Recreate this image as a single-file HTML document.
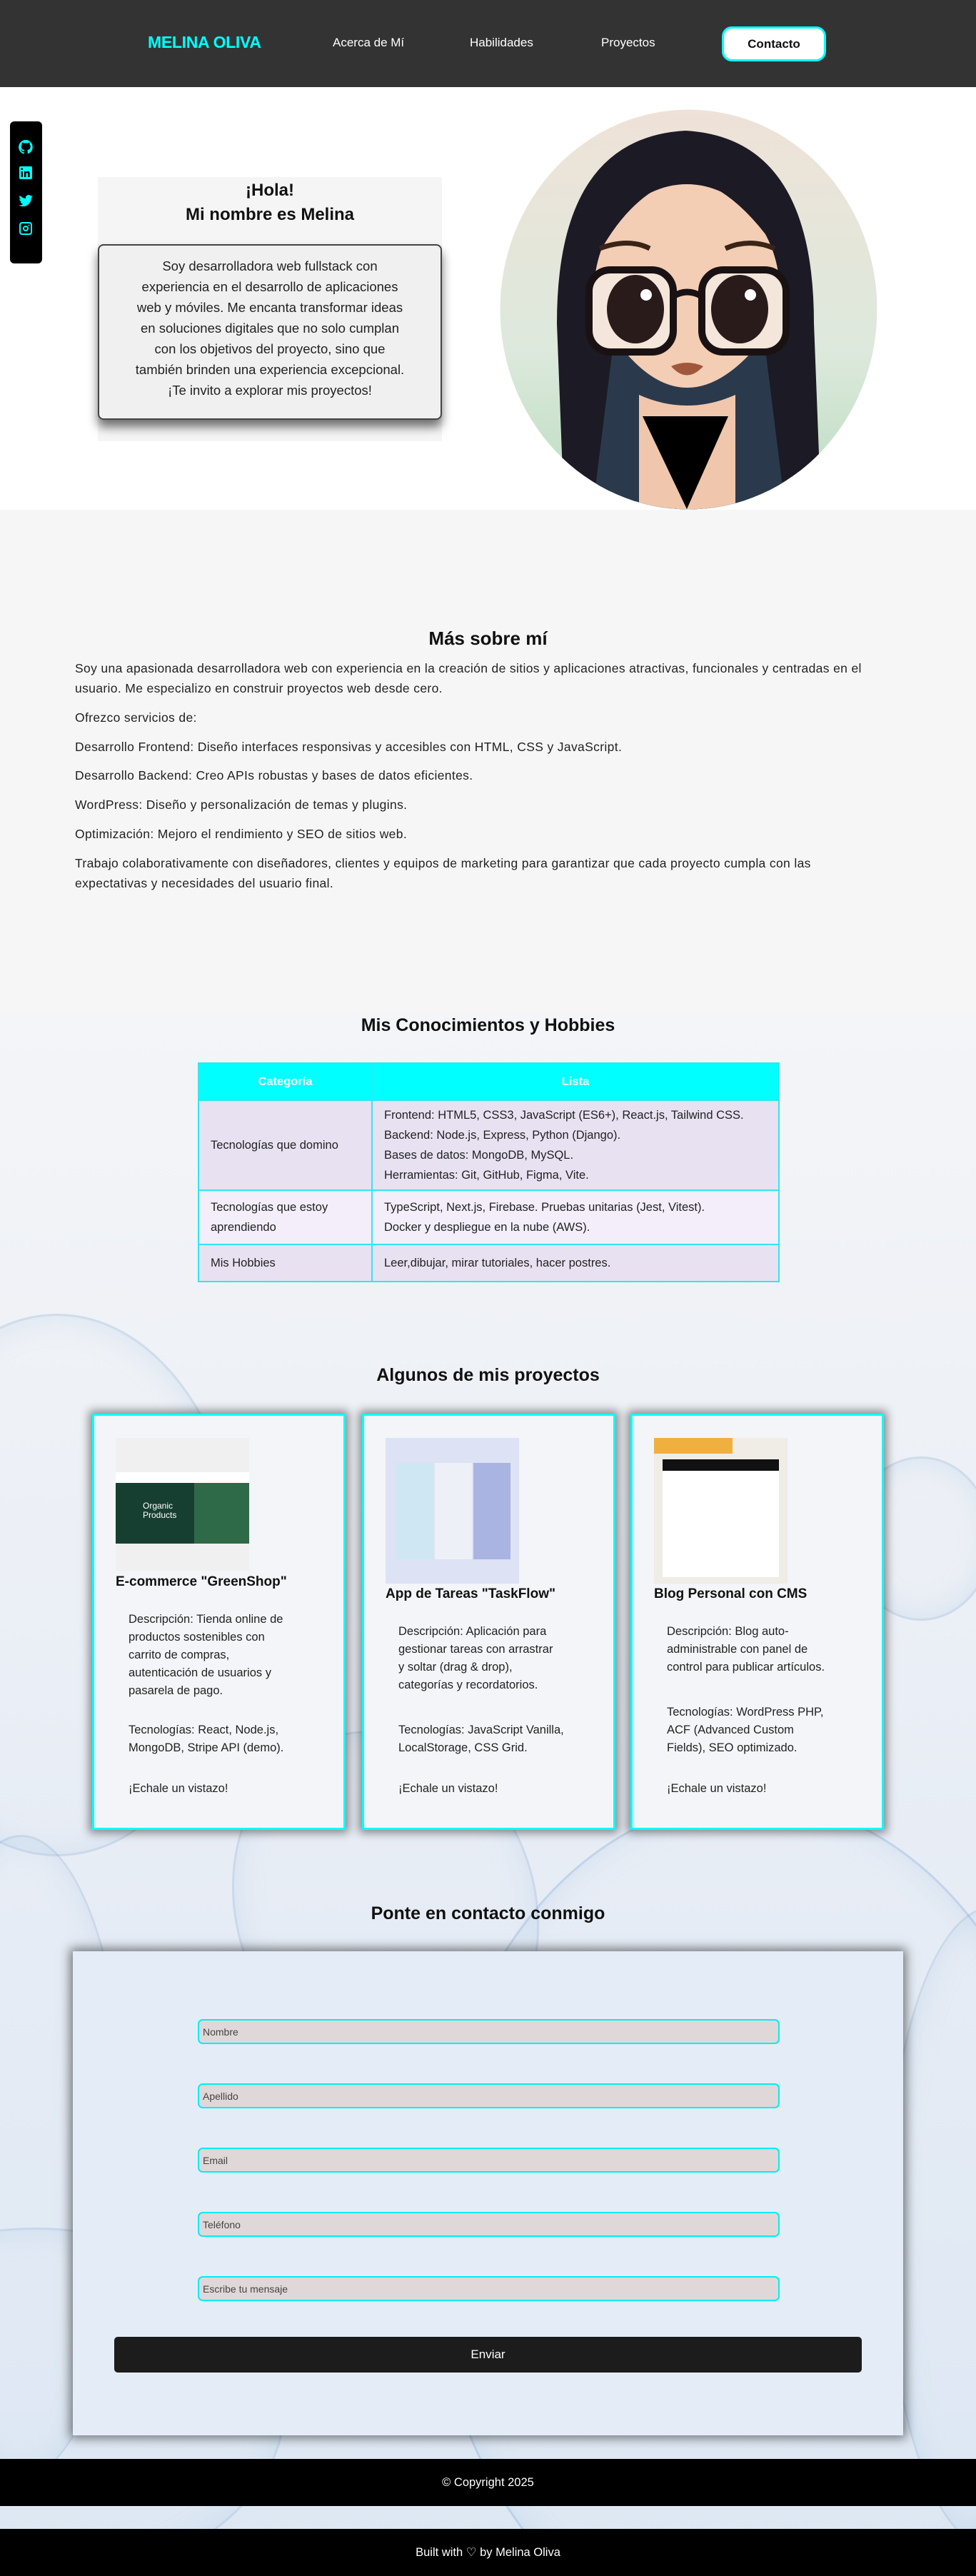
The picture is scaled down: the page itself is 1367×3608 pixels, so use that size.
<!DOCTYPE html>
<html><head><meta charset="utf-8">
<style>
*{margin:0;padding:0;box-sizing:border-box}
body{width:1367px;height:3608px;position:relative;font-family:"Liberation Sans",sans-serif;color:#111;background:#fff;overflow:hidden}
.abs{position:absolute}
header{position:absolute;left:0;top:0;width:1367px;height:122px;background:#333}
.logo{left:207px;top:46px;color:#00ffff;font-weight:bold;font-size:23px;letter-spacing:-0.3px}
.nav{top:50px;color:#fff;font-size:17px}
.btn{left:1011px;top:37px;width:146px;height:49px;background:#fff;border:3px solid #00ffff;border-radius:14px;text-align:center;line-height:43px;font-size:17px;font-weight:bold;color:#111}
.side{left:14px;top:170px;width:45px;height:199px;background:#000;border-radius:6px}
.hero{left:137px;top:248px;width:482px;height:370px;background:#f5f5f5}
.hero h2{text-align:center;font-size:24px;line-height:34px;margin-top:2px}
.inner{left:137px;top:342px;width:482px;height:246px;background:#f0f0f0;border:2px solid #444;border-radius:8px;box-shadow:0 10px 14px rgba(0,0,0,.55);text-align:center;font-size:18.5px;line-height:29px;padding-top:14px;color:#222}
.about{left:0;top:714px;width:1367px;height:706px;background:#f6f6f7}
.h{font-weight:bold;text-align:center;font-size:26px;width:1367px;left:0}
.p{left:105px;width:1200px;font-size:17.5px;letter-spacing:0.35px;line-height:28px;color:#222;white-space:nowrap}
.bg{left:0;top:1420px;width:1367px;height:2188px;background:linear-gradient(180deg,#f4f5f8 0%,#eef1f6 25%,#e6ecf5 60%,#dce7f3 100%);overflow:hidden}
.bub{position:absolute;border-radius:50%;border:3px solid rgba(150,180,215,.35);box-shadow:inset 0 0 40px rgba(170,200,230,.35)}
table{position:absolute;left:277px;top:1488px;width:815px;border-collapse:collapse;font-size:16.5px;color:#222}
td,th{border:2px solid #2ee8f0;padding:0 16px;vertical-align:middle;line-height:28px}
th{background:#00ffff;color:#fff;height:52px;font-weight:bold}
.card{width:355px;height:583px;top:1980px;background:#f3f5f9;border:3px solid #00ffff;box-shadow:0 0 12px 4px rgba(0,0,0,.45)}
.card h3{position:absolute;font-size:19px;font-weight:bold;white-space:nowrap}
.card .d{position:absolute;left:48px;width:280px;font-size:16.5px;line-height:25px;color:#222;white-space:nowrap}
.form{left:102px;top:2733px;width:1163px;height:678px;background:#e4edf7;box-shadow:0 0 14px 4px rgba(0,0,0,.5)}
.inp{left:277px;width:815px;height:35px;background:#e0d8d8;border:2px solid #00eef5;border-radius:7px;font-size:14px;color:#444;padding:8px 5px}
.send{left:160px;top:3273px;width:1047px;height:50px;background:#1c1c1c;border-radius:5px;color:#fff;text-align:center;line-height:50px;font-size:17px}
.foot{left:0;width:1367px;background:#000;color:#fff;text-align:center;font-size:16.5px}
</style></head><body>
<header>
<div class="abs logo">MELINA OLIVA</div>
<div class="abs nav" style="left:466px">Acerca de Mí</div>
<div class="abs nav" style="left:658px">Habilidades</div>
<div class="abs nav" style="left:842px">Proyectos</div>
<div class="abs btn">Contacto</div>
</header>

<div class="abs hero"><h2>¡Hola!<br>Mi nombre es Melina</h2></div>
<div class="abs inner">Soy desarrolladora web fullstack con<br>experiencia en el desarrollo de aplicaciones<br>web y móviles. Me encanta transformar ideas<br>en soluciones digitales que no solo cumplan<br>con los objetivos del proyecto, sino que<br>también brinden una experiencia excepcional.<br>¡Te invito a explorar mis proyectos!</div>

<svg class="abs" style="left:700px;top:153px" width="529" height="561" viewBox="0 0 529 561">
<defs><clipPath id="c"><ellipse cx="264.5" cy="280.5" rx="264" ry="280"/></clipPath>
<linearGradient id="g" x1="0" y1="0" x2="0" y2="1"><stop offset="0" stop-color="#efe2d8"/><stop offset=".6" stop-color="#dde9dc"/><stop offset="1" stop-color="#b9dcc0"/></linearGradient></defs>
<g clip-path="url(#c)">
<rect width="529" height="561" fill="url(#g)"/>
<path d="M90 561 L80 300 Q80 40 260 30 Q440 40 440 300 L450 561Z" fill="#1c1a25"/>
<ellipse cx="262" cy="255" rx="130" ry="150" fill="#f3cdb4"/>
<path d="M140 200 Q170 70 262 60 Q360 70 390 200 Q330 110 262 95 Q190 110 140 200Z" fill="#1c1a25"/>
<path d="M160 320 L130 561 L400 561 L370 320 Q260 460 160 320Z" fill="#2a3a4c"/>
<path d="M195 400 Q262 430 330 400 L330 561 L195 561Z" fill="#f0c7ac"/>
<path d="M200 430 L262 560 L320 430" fill="#000"/>
<rect x="125" y="225" width="118" height="115" rx="30" fill="#f5e6dc" stroke="#1a1212" stroke-width="10"/>
<rect x="283" y="225" width="118" height="115" rx="30" fill="#f5e6dc" stroke="#1a1212" stroke-width="10"/>
<path d="M243 262 Q262 250 283 262" stroke="#1a1212" stroke-width="9" fill="none"/>
<ellipse cx="190" cy="280" rx="40" ry="48" fill="#2a1b1b"/>
<ellipse cx="336" cy="280" rx="40" ry="48" fill="#2a1b1b"/>
<circle cx="205" cy="260" r="8" fill="#fff"/><circle cx="351" cy="260" r="8" fill="#fff"/>
<path d="M140 195 Q180 180 210 195" stroke="#3a2418" stroke-width="7" fill="none"/>
<path d="M316 195 Q350 180 385 195" stroke="#3a2418" stroke-width="7" fill="none"/>
<path d="M240 360 Q262 350 285 360 Q262 385 240 360Z" fill="#a0583c"/>
</g></svg>

<div class="abs side">
<svg width="45" height="199" viewBox="0 0 45 199" fill="#00ffff">
<path d="M22 26a10 10 0 0 0-3 19.5c.5.1.7-.2.7-.5v-2c-2.8.6-3.4-1.3-3.4-1.3-.5-1.2-1.1-1.5-1.1-1.5-.9-.6.1-.6.1-.6 1 .1 1.5 1 1.5 1 .9 1.5 2.4 1.1 3 .8.1-.6.4-1.1.6-1.3-2.2-.3-4.6-1.1-4.6-5 0-1.1.4-2 1-2.7-.1-.3-.4-1.3.1-2.7 0 0 .8-.3 2.8 1a9.6 9.6 0 0 1 5 0c1.9-1.3 2.8-1 2.8-1 .5 1.4.2 2.4.1 2.7.6.7 1 1.6 1 2.7 0 3.9-2.3 4.7-4.6 5 .4.3.7.9.7 1.9v2.8c0 .3.2.6.7.5A10 10 0 0 0 22 26z"/>
<rect x="13" y="63" width="18" height="18" rx="2"/><g fill="#000"><rect x="15.5" y="70" width="2.5" height="8"/><circle cx="16.7" cy="66.8" r="1.5"/><path d="M20 70h2.4v1.2c.5-.8 1.4-1.4 2.6-1.4 2 0 2.6 1.3 2.6 3.2V78h-2.5v-4.3c0-1-.3-1.6-1.2-1.6s-1.4.7-1.4 1.6V78H20z"/></g>
<path d="M32 105a8 8 0 0 1-2.3.6 4 4 0 0 0 1.8-2.2 8 8 0 0 1-2.5 1 4 4 0 0 0-6.9 3.6 11.5 11.5 0 0 1-8.3-4.2 4 4 0 0 0 1.2 5.4 4 4 0 0 1-1.8-.5 4 4 0 0 0 3.2 4 4 4 0 0 1-1.8.1 4 4 0 0 0 3.8 2.8A8.1 8.1 0 0 1 12 117.3a11.5 11.5 0 0 0 17.7-10.2A8 8 0 0 0 32 105z"/>
<path d="M17 141h10a4 4 0 0 1 4 4v10a4 4 0 0 1-4 4H17a4 4 0 0 1-4-4v-10a4 4 0 0 1 4-4zm0 2a2 2 0 0 0-2 2v10a2 2 0 0 0 2 2h10a2 2 0 0 0 2-2v-10a2 2 0 0 0-2-2zm5 3a4 4 0 1 1 0 8 4 4 0 0 1 0-8zm0 2a2 2 0 1 0 0 4 2 2 0 0 0 0-4zm4.5-3.5a1 1 0 1 1 0 2 1 1 0 0 1 0-2z"/>
</svg></div>

<div class="abs about"></div>
<div class="abs h" style="top:879px">Más sobre mí</div>
<div class="abs p" style="top:922px">Soy una apasionada desarrolladora web con experiencia en la creación de sitios y aplicaciones atractivas, funcionales y centradas en el<br>usuario. Me especializo en construir proyectos web desde cero.</div>
<div class="abs p" style="top:991px">Ofrezco servicios de:</div>
<div class="abs p" style="top:1032px">Desarrollo Frontend: Diseño interfaces responsivas y accesibles con HTML, CSS y JavaScript.</div>
<div class="abs p" style="top:1072px">Desarrollo Backend: Creo APIs robustas y bases de datos eficientes.</div>
<div class="abs p" style="top:1113px">WordPress: Diseño y personalización de temas y plugins.</div>
<div class="abs p" style="top:1154px">Optimización: Mejoro el rendimiento y SEO de sitios web.</div>
<div class="abs p" style="top:1195px">Trabajo colaborativamente con diseñadores, clientes y equipos de marketing para garantizar que cada proyecto cumpla con las<br>expectativas y necesidades del usuario final.</div>

<div class="abs bg">
<div class="bub" style="left:-180px;top:420px;width:520px;height:760px"></div>
<div class="bub" style="left:1190px;top:620px;width:200px;height:230px"></div>
<div class="bub" style="left:330px;top:1000px;width:420px;height:500px;transform:rotate(-20deg)"></div>
<div class="bub" style="left:-120px;top:1150px;width:300px;height:900px"></div>
<div class="bub" style="left:1240px;top:1250px;width:300px;height:900px"></div>
<div class="bub" style="left:600px;top:1100px;width:900px;height:1200px;border-color:rgba(120,165,215,.35)"></div>
<div class="bub" style="left:-300px;top:1700px;width:700px;height:500px"></div>
</div>

<div class="abs h" style="top:1422px;font-size:25px">Mis Conocimientos y Hobbies</div>
<table>
<tr><th style="width:243px">Categoría</th><th>Lista</th></tr>
<tr style="background:#e8e1f1;height:126px"><td>Tecnologías que domino</td><td>Frontend: HTML5, CSS3, JavaScript (ES6+), React.js, Tailwind CSS.<br>Backend: Node.js, Express, Python (Django).<br>Bases de datos: MongoDB, MySQL.<br>Herramientas: Git, GitHub, Figma, Vite.</td></tr>
<tr style="background:#f3eefa;height:76px"><td>Tecnologías que estoy<br>aprendiendo</td><td>TypeScript, Next.js, Firebase. Pruebas unitarias (Jest, Vitest).<br>Docker y despliegue en la nube (AWS).</td></tr>
<tr style="background:#e8e1f1;height:52px"><td>Mis Hobbies</td><td>Leer,dibujar, mirar tutoriales, hacer postres.</td></tr>
</table>

<div class="abs h" style="top:1912px;font-size:25px">Algunos de mis proyectos</div>

<div class="abs card" style="left:129px">
 <div class="abs" style="left:30px;top:31px;width:187px;height:186px;background:#f0f0f0">
  <div class="abs" style="left:0;top:48px;width:187px;height:15px;background:#fff"></div>
  <div class="abs" style="left:0;top:63px;width:187px;height:85px;background:#173f31;color:#fff;font-size:12px;padding:26px 0 0 38px;line-height:13px">Organic<br>Products</div>
  <div class="abs" style="left:110px;top:63px;width:77px;height:85px;background:#2f6a48"></div>
 </div>
 <h3 style="left:30px;top:222px">E-commerce "GreenShop"</h3>
 <div class="d" style="top:273px">Descripción: Tienda online de<br>productos sostenibles con<br>carrito de compras,<br>autenticación de usuarios y<br>pasarela de pago.</div>
 <div class="d" style="top:428px">Tecnologías: React, Node.js,<br>MongoDB, Stripe API (demo).</div>
 <div class="d" style="top:510px">¡Echale un vistazo!</div>
</div>
<div class="abs card" style="left:507px">
 <div class="abs" style="left:30px;top:31px;width:187px;height:204px;background:#dde2f4">
  <div class="abs" style="left:15px;top:35px;width:52px;height:135px;background:#cfe7f3"></div>
  <div class="abs" style="left:69px;top:35px;width:52px;height:135px;background:#eef0f7"></div>
  <div class="abs" style="left:123px;top:35px;width:52px;height:135px;background:#a9b4e3"></div>
 </div>
 <h3 style="left:30px;top:239px">App de Tareas "TaskFlow"</h3>
 <div class="d" style="top:290px">Descripción: Aplicación para<br>gestionar tareas con arrastrar<br>y soltar (drag &amp; drop),<br>categorías y recordatorios.</div>
 <div class="d" style="top:428px">Tecnologías: JavaScript Vanilla,<br>LocalStorage, CSS Grid.</div>
 <div class="d" style="top:510px">¡Echale un vistazo!</div>
</div>
<div class="abs card" style="left:883px">
 <div class="abs" style="left:30px;top:31px;width:187px;height:204px;background:#f0ece6">
  <div class="abs" style="left:0;top:0;width:110px;height:22px;background:#f0b040"></div>
  <div class="abs" style="left:12px;top:30px;width:163px;height:165px;background:#fff;border-top:16px solid #111"></div>
 </div>
 <h3 style="left:30px;top:239px">Blog Personal con CMS</h3>
 <div class="d" style="top:290px">Descripción: Blog auto-<br>administrable con panel de<br>control para publicar artículos.</div>
 <div class="d" style="top:403px">Tecnologías: WordPress PHP,<br>ACF (Advanced Custom<br>Fields), SEO optimizado.</div>
 <div class="d" style="top:510px">¡Echale un vistazo!</div>
</div>

<div class="abs h" style="top:2666px;font-size:25px">Ponte en contacto conmigo</div>
<div class="abs form"></div>
<div class="abs inp" style="top:2828px">Nombre</div>
<div class="abs inp" style="top:2918px">Apellido</div>
<div class="abs inp" style="top:3008px">Email</div>
<div class="abs inp" style="top:3098px">Teléfono</div>
<div class="abs inp" style="top:3188px">Escribe tu mensaje</div>
<div class="abs send">Enviar</div>

<div class="abs foot" style="top:3444px;height:66px;line-height:66px">© Copyright 2025</div>
<div class="abs foot" style="top:3542px;height:66px;line-height:66px">Built with ♡ by Melina Oliva</div>
</body></html>
